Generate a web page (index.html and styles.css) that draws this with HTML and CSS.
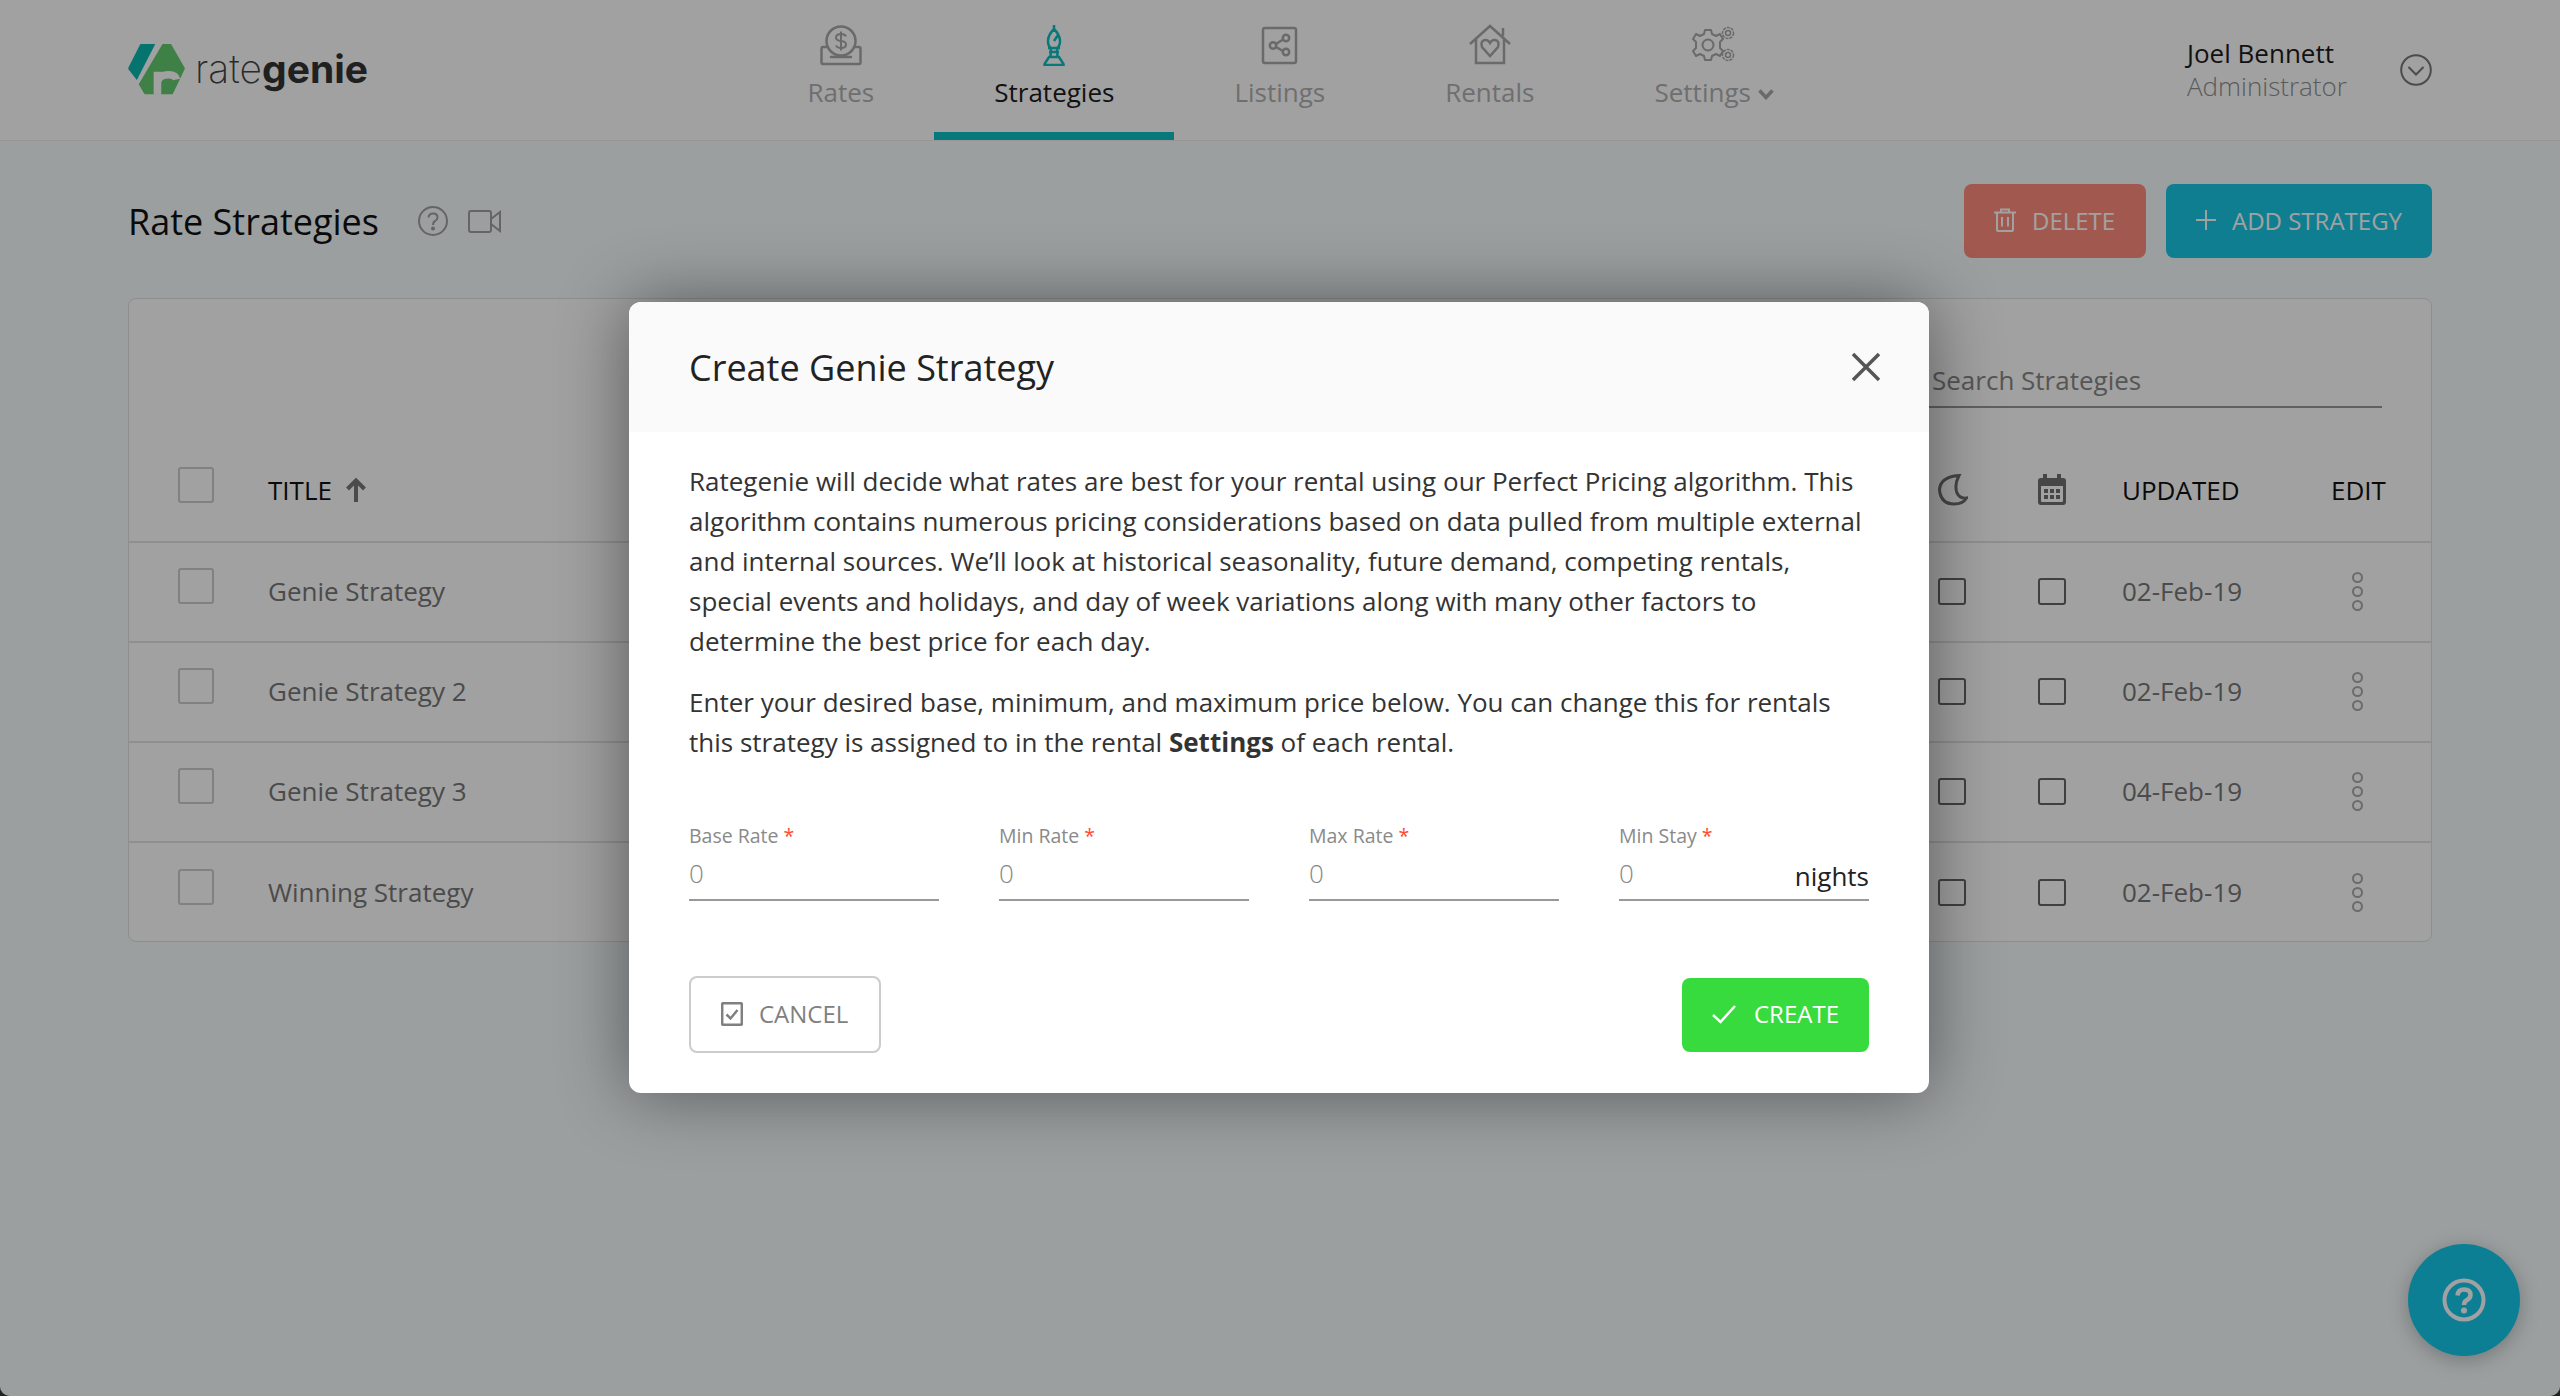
FILE: index.html
```html
<!DOCTYPE html>
<html lang="en">
<head>
    <meta charset="UTF-8">
    <meta name="viewport" content="width=device-width, initial-scale=1.0">
    <title>Rate Strategies</title>
    <link rel="stylesheet" href="styles.css">
</head>
<body>
    <div class="page">
        <header class="topbar">
            <a class="logo">
                <svg class="logo-mark" width="60" height="54" viewBox="0 0 60 54">
                    <path d="M13 .7H28.7L9.3 38.7 .6 27.6Q0 26.4 .6 25.2Z" fill="#0ab8af"/>
                    <path d="M36.3 .7H45.3L59.6 25.6Q60 26.4 59.6 27.2L47 53.7H19Q17.5 53.7 16.8 52.4L11.3 43Z" fill="#65cb70"/>
                    <path d="M31 54V30M31 41Q32 33 43 33Q50 33 51 38" fill="none" stroke="#fff" stroke-width="8"/>
                </svg>
                <span class="logo-text">rate<b>genie</b></span>
            </a>

            <nav class="tabs">
                <a class="tab">
                    <svg width="42" height="42" viewBox="0 0 42 42" fill="none" stroke="#a8a8a8" stroke-width="2.5">
                        <circle cx="21" cy="17" r="14.5"/>
                        <path d="M8 23H3Q1.500 23 1.500 25V38Q1.500 40 3 40H39Q40.500 40 40.500 38V25Q40.500 23 39 23H34M11 33H31" stroke-linecap="round"/>
                        <path d="M26 12.500Q25 10 21 10Q16 10 16 13.500Q16 16.500 21 17Q26 17.500 26 20.500Q26 24 21 24Q17 24 16 21.500M21 7.500V26.500" stroke-width="2"/>
                    </svg>
                    <span>Rates</span>
                </a>
                <a class="tab active">
                    <svg width="42" height="42" viewBox="0 0 42 42" fill="none" stroke="#0dbec2" stroke-width="2.5">
                        <path d="M21 1V5M21 5Q27 11 27 17Q27 22 24 24H18Q15 22 15 17Q15 11 21 5ZM21 17L25 11M15 24H27M16 28H26M18 24L17.500 33H24.500L24 24M16 33H26L30.500 40V41H11.500V40Z"/>
                    </svg>
                    <span>Strategies</span>
                </a>
                <a class="tab">
                    <svg width="42" height="42" viewBox="0 0 42 42" fill="none" stroke="#a8a8a8" stroke-width="2.5">
                        <rect x="4" y="4" width="33" height="35" rx="2"/>
                        <circle cx="27" cy="14" r="3.200"/>
                        <circle cx="14" cy="21.500" r="3.200"/>
                        <circle cx="27" cy="28" r="3.200"/>
                        <path d="M17 20L24 15.500M17 23L24 27"/>
                    </svg>
                    <span>Listings</span>
                </a>
                <a class="tab">
                    <svg width="42" height="42" viewBox="0 0 42 42" fill="none" stroke="#a8a8a8" stroke-width="2.5">
                        <path d="M1 20L21 2L41 20M7 15V39H35V15M34 4V12"/>
                        <path d="M21 32L13 23Q11 17 16 16Q19 15.500 21 19Q23 15.500 26 16Q31 17 29 23Z"/>
                    </svg>
                    <span>Rentals</span>
                </a>
                <a class="tab">
                    <svg width="44" height="42" viewBox="0 0 44 42" fill="none" stroke="#a8a8a8" stroke-width="2">
                        <circle cx="16" cy="21" r="5.500"/>
                        <path d="M13 6H19L20 10L24 12L28 10L31 15L28 18V24L31 27L28 32L24 30L20 32L19 36H13L12 32L8 30L4 32L1 27L4 24V18L1 15L4 10L8 12L12 10Z" stroke-linejoin="round"/>
                        <circle cx="36" cy="9" r="5.500" stroke-width="1.500" stroke-dasharray="3 1"/>
                        <circle cx="36" cy="9" r="2.500" stroke-width="1.500"/>
                        <circle cx="36" cy="31" r="5.500" stroke-width="1.500" stroke-dasharray="3 1"/>
                        <circle cx="36" cy="31" r="2.500" stroke-width="1.500"/>
                    </svg>
                    <span class="tab-caret">Settings <svg class="caret" width="16" height="11" viewBox="0 0 16 11" fill="none" stroke="#a8a8a8" stroke-width="3.500"><path d="M1.500 1.500L8 8.500L14.500 1.500"/></svg></span>
                </a>
            </nav>

            <div class="user">
                <div class="user-info">
                    <div class="user-name">Joel Bennett</div>
                    <div class="user-role">Administrator</div>
                </div>
                <svg width="32" height="32" viewBox="0 0 32 32" fill="none" stroke="#777" stroke-width="2">
                    <circle cx="16" cy="16" r="14.800"/>
                    <path d="M8.500 13L16 20.500L23.500 13"/>
                </svg>
            </div>
        </header>

        <main class="content">
            <div class="title-row">
                <h1>Rate Strategies</h1>
                <svg class="help-icon" width="30" height="30" viewBox="0 0 30 30" fill="none" stroke="#a0a0a0" stroke-width="2">
                    <circle cx="15" cy="15" r="14"/>
                    <path d="M10.500 11.500Q11 7.500 15 7.500Q19.500 7.500 19.500 11.500Q19.500 13.500 17 15Q15 16 15 19"/>
                    <circle cx="15" cy="22.500" r="1" fill="#a0a0a0"/>
                </svg>
                <svg class="video-icon" width="33" height="23" viewBox="0 0 33 23" fill="none" stroke="#a0a0a0" stroke-width="2">
                    <rect x="1" y="1" width="22" height="21" rx="2"/>
                    <path d="M23 9L32 2V21L23 14"/>
                </svg>
                <div class="title-actions">
                    <button class="btn btn-delete">
                        <svg width="22" height="24" viewBox="0 0 22 24" fill="none" stroke="#fff" stroke-width="2">
                            <path d="M0 4.500H22M7 4.500V1.500H15V4.500M3 4.500V22Q3 23 4 23H18Q19 23 19 22V4.500M8 9V18.500M14 9V18.500"/>
                        </svg>
                        DELETE
                    </button>
                    <button class="btn btn-add">
                        <svg width="20" height="20" viewBox="0 0 20 20" fill="none" stroke="#fff" stroke-width="2">
                            <path d="M10 0V20M0 10H20"/>
                        </svg>
                        ADD STRATEGY
                    </button>
                </div>
            </div>

            <section class="card">
                <div class="toolbar">
                    <div class="search">Search Strategies</div>
                </div>
                <div class="row head">
                    <span class="check"></span>
                    <span class="cell-title">TITLE
                        <svg width="20" height="24" viewBox="0 0 20 24" fill="none" stroke="#777" stroke-width="4"><path d="M10 24V3M1.500 11L10 2.500L18.500 11"/></svg>
                    </span>
                    <span>
                        <svg width="30" height="32" viewBox="0 0 30 32" fill="none" stroke="#707070" stroke-width="3"><path d="M21 1.500Q2 3 1.500 16Q3 30 16 30Q25 30 28.500 24Q22 25 19 19Q16 11 21 1.500Z"/></svg>
                    </span>
                    <span>
                        <svg width="28" height="32" viewBox="0 0 28 32"><path d="M5 0H9V4H19V0H23V4H25Q28 4 28 7V28Q28 31 25 31H3Q0 31 0 28V7Q0 4 3 4H5ZM3 12V27Q3 28 4 28H24Q25 28 25 27V12ZM6 15H10V19H6ZM12 15H16V19H12ZM18 15H22V19H18ZM6 21H10V25H6ZM12 21H16V25H12ZM18 21H22V25H18Z" fill="#707070" fill-rule="evenodd"/></svg>
                    </span>
                    <span>UPDATED</span>
                    <span>EDIT</span>
                </div>

                <div class="row">
                    <span class="check"></span>
                    <span class="cell-title">Genie Strategy</span>
                    <span class="tick"></span>
                    <span class="tick"></span>
                    <span>02-Feb-19</span>
                    <span class="dots"><i></i><i></i><i></i></span>
                </div>
                <div class="row">
                    <span class="check"></span>
                    <span class="cell-title">Genie Strategy 2</span>
                    <span class="tick"></span>
                    <span class="tick"></span>
                    <span>02-Feb-19</span>
                    <span class="dots"><i></i><i></i><i></i></span>
                </div>
                <div class="row">
                    <span class="check"></span>
                    <span class="cell-title">Genie Strategy 3</span>
                    <span class="tick"></span>
                    <span class="tick"></span>
                    <span>04-Feb-19</span>
                    <span class="dots"><i></i><i></i><i></i></span>
                </div>
                <div class="row">
                    <span class="check"></span>
                    <span class="cell-title">Winning Strategy</span>
                    <span class="tick"></span>
                    <span class="tick"></span>
                    <span>02-Feb-19</span>
                    <span class="dots"><i></i><i></i><i></i></span>
                </div>
            </section>
        </main>

        <button class="help-fab">
            <svg width="44" height="44" viewBox="0 0 44 44" fill="none" stroke="#fff" stroke-width="4">
                <circle cx="22" cy="22" r="19.500"/>
                <path d="M15.500 17.500Q16 11.500 22 11.500Q28.500 11.500 28.500 17Q28.500 20 25 22Q22 23.500 22 27" stroke-width="4.500"/>
                <circle cx="22" cy="32.500" r="3" fill="#fff" stroke="none"/>
            </svg>
        </button>

        <div class="overlay">
            <div class="modal">
                <div class="modal-head">
                    <h2>Create Genie Strategy</h2>
                    <svg width="30" height="30" viewBox="0 0 30 30" fill="none" stroke="#555" stroke-width="3.500">
                        <path d="M2 2L28 28M28 2L2 28"/>
                    </svg>
                </div>
                <div class="modal-body">
                    <p>Rategenie will decide what rates are best for your rental using our Perfect Pricing algorithm. This algorithm contains numerous pricing considerations based on data pulled from multiple external and internal sources. We’ll look at historical seasonality, future demand, competing rentals, special events and holidays, and day of week variations along with many other factors to determine the best price for each day.</p>
                    <p>Enter your desired base, minimum, and maximum price below. You can change this for rentals this strategy is assigned to in the rental <strong>Settings</strong> of each rental.</p>

                    <div class="fields">
                        <div class="field">
                            <label>Base Rate <em>*</em></label>
                            <div class="input"><span>0</span></div>
                        </div>
                        <div class="field">
                            <label>Min Rate <em>*</em></label>
                            <div class="input"><span>0</span></div>
                        </div>
                        <div class="field">
                            <label>Max Rate <em>*</em></label>
                            <div class="input"><span>0</span></div>
                        </div>
                        <div class="field">
                            <label>Min Stay <em>*</em></label>
                            <div class="input"><span>0</span><b>nights</b></div>
                        </div>
                    </div>

                    <div class="modal-actions">
                        <button class="btn btn-cancel">
                            <svg width="22" height="24" viewBox="0 0 22 24" fill="none" stroke="#808080" stroke-width="2.500">
                                <rect x="1.200" y="1.200" width="19.600" height="21.600" rx="1"/>
                                <path d="M5.500 12.500L9.500 16.500L16.500 8"/>
                            </svg>
                            CANCEL
                        </button>
                        <button class="btn btn-create">
                            <svg width="24" height="20" viewBox="0 0 24 20" fill="none" stroke="#fff" stroke-width="2.500">
                                <path d="M1 11L8.500 18L23 2"/>
                            </svg>
                            CREATE
                        </button>
                    </div>
                </div>
            </div>
        </div>
    </div>
</body>
</html>
```

FILE: styles.css
```css
* {
    box-sizing: border-box;
}

body {
    margin: 0;
    background-color: #222;
    font-family: "Open Sans", sans-serif;
    font-size: 26px;
    color: #333;
}

.page {
    position: relative;
    height: 1396px;
    overflow: hidden;
    background-color: #f6fcfc;
    border-radius: 0 0 10px 10px;
}

/* top bar */
.topbar {
    display: flex;
    height: 141px;
    padding: 0 128px;
    background-color: #fff;
    border-bottom: 1px solid #eee;
}

.logo {
    display: flex;
    align-items: center;
    width: 240px;
    margin-top: -3px;
}

.logo-text {
    margin-left: 10px;
    font-family: "Inter", sans-serif;
    font-size: 39px;
    font-weight: 200;
    color: #444;
}

.logo-text b {
    font-weight: 700;
    color: #333;
}

.tabs {
    display: flex;
    margin-left: 379.5px;
}

.tab {
    display: flex;
    flex-direction: column;
    align-items: center;
    height: 140px;
    padding: 24px 60px 0;
    color: #b0b0b0;
    line-height: 36px;
}

.tab svg {
    margin-bottom: 8px;
}

.tab .caret {
    margin: 0 0 2px;
}

.tab.active {
    color: #1c1c1c;
    border-bottom: 8px solid #0dbec2;
}

.user {
    display: flex;
    align-items: center;
    justify-content: space-between;
    width: 245px;
    margin-left: auto;
}

.user-name {
    line-height: 33px;
    color: #1c1c1c;
}

.user-role {
    line-height: 33px;
    font-weight: 300;
    color: #909090;
}

/* page content */
.content {
    padding: 43px 128px 0;
}

.title-row {
    display: flex;
    align-items: center;
    height: 74px;
}

h1 {
    margin: 0;
    font-size: 36px;
    font-weight: 400;
    color: #111;
}

.help-icon {
    margin-left: 39px;
}

.video-icon {
    margin-left: 20px;
}

.title-actions {
    display: flex;
    gap: 20px;
    margin-left: auto;
}

.btn {
    display: flex;
    align-items: center;
    gap: 16px;
    height: 74px;
    padding: 0 30px 2px;
    border: none;
    border-radius: 8px;
    font-family: inherit;
    font-size: 24px;
    color: #fff;
    white-space: nowrap;
}

.btn-delete {
    width: 182px;
    background-color: #ff8e7e;
}

.btn-add {
    width: 266px;
    background-color: #19c8e4;
}

.card {
    margin-top: 40px;
    height: 644px;
    background-color: #fff;
    border: 1px solid #dfe2e2;
    border-radius: 8px;
    color: #777;
}

.toolbar {
    display: flex;
    justify-content: flex-end;
    height: 130px;
    padding: 54px 49px 0 0;
}

.search {
    width: 482px;
    height: 55px;
    padding-left: 32px;
    line-height: 54px;
    border-bottom: 2px solid #999;
    color: #888;
}

.row {
    display: grid;
    grid-template-columns: 90px 1fr 100px 84px 209px 100px;
    align-items: center;
    height: 100px;
    padding: 0 0 2px 49px;
    border-bottom: 2px solid #e3e3e3;
}

.row:last-child {
    border-bottom: none;
}

.row.head {
    height: 114px;
    padding: 10px 0 0 49px;
    color: #111;
}

.row.head svg {
    display: block;
}

.check {
    width: 36px;
    height: 36px;
    margin-top: -10px;
    background-color: #fff;
    border: 2px solid #ccc;
    border-radius: 3px;
}

.cell-title {
    display: flex;
    align-items: center;
    justify-self: start;
    gap: 14px;
}

.tick {
    width: 28px;
    height: 27px;
    border: 2px solid #666;
    border-radius: 3px;
}

.dots {
    display: flex;
    flex-direction: column;
    align-items: center;
    gap: 3px;
    width: 53px;
}

.dots i {
    width: 11px;
    height: 11px;
    border: 2px solid #aaa;
    border-radius: 50%;
}

.help-fab {
    position: absolute;
    right: 40px;
    bottom: 40px;
    display: flex;
    align-items: center;
    justify-content: center;
    width: 112px;
    height: 112px;
    border: none;
    border-radius: 50%;
    background-color: #16c9ec;
    box-shadow: 0 4px 20px rgba(0, 0, 0, 0.25);
}

/* modal */
.overlay {
    position: absolute;
    inset: 0;
    display: flex;
    align-items: center;
    justify-content: center;
    padding: 0 2px 1px 0;
    background-color: rgba(0, 0, 0, 0.37);
}

.modal {
    width: 1300px;
    height: 791px;
    overflow: hidden;
    background-color: #fff;
    border-radius: 12px;
    box-shadow: 0 0 70px rgba(0, 0, 0, 0.45);
}

.modal-head {
    display: flex;
    align-items: center;
    justify-content: space-between;
    height: 130px;
    padding: 0 48px 0 60px;
    background-color: #fafafa;
}

h2 {
    margin: 0;
    font-size: 36px;
    font-weight: 400;
    color: #222;
}

.modal-body {
    padding: 29px 60px 0;
}

.modal-body p {
    margin: 0 0 21px;
    line-height: 40px;
}

.fields {
    display: grid;
    grid-template-columns: repeat(4, 1fr);
    gap: 60px;
    margin-top: 59px;
}

.field label {
    display: block;
    font-size: 19.5px;
    line-height: 30px;
    color: #8a8a8a;
}

.field em {
    font-style: normal;
    color: #ff4a30;
}

.input {
    display: flex;
    align-items: center;
    justify-content: space-between;
    height: 50px;
    padding-bottom: 4px;
    border-bottom: 2px solid #999;
    font-weight: 300;
    color: #888;
}

.input b {
    margin-top: 6px;
    font-weight: 400;
    color: #222;
}

.modal-actions {
    display: flex;
    align-items: center;
    justify-content: space-between;
    margin-top: 75px;
}

.btn-cancel {
    width: 192px;
    height: 77px;
    background-color: #fff;
    border: 2px solid #ccc;
    color: #808080;
}

.btn-create {
    width: 187px;
    gap: 18px;
    background-color: #38db3d;
}
```
